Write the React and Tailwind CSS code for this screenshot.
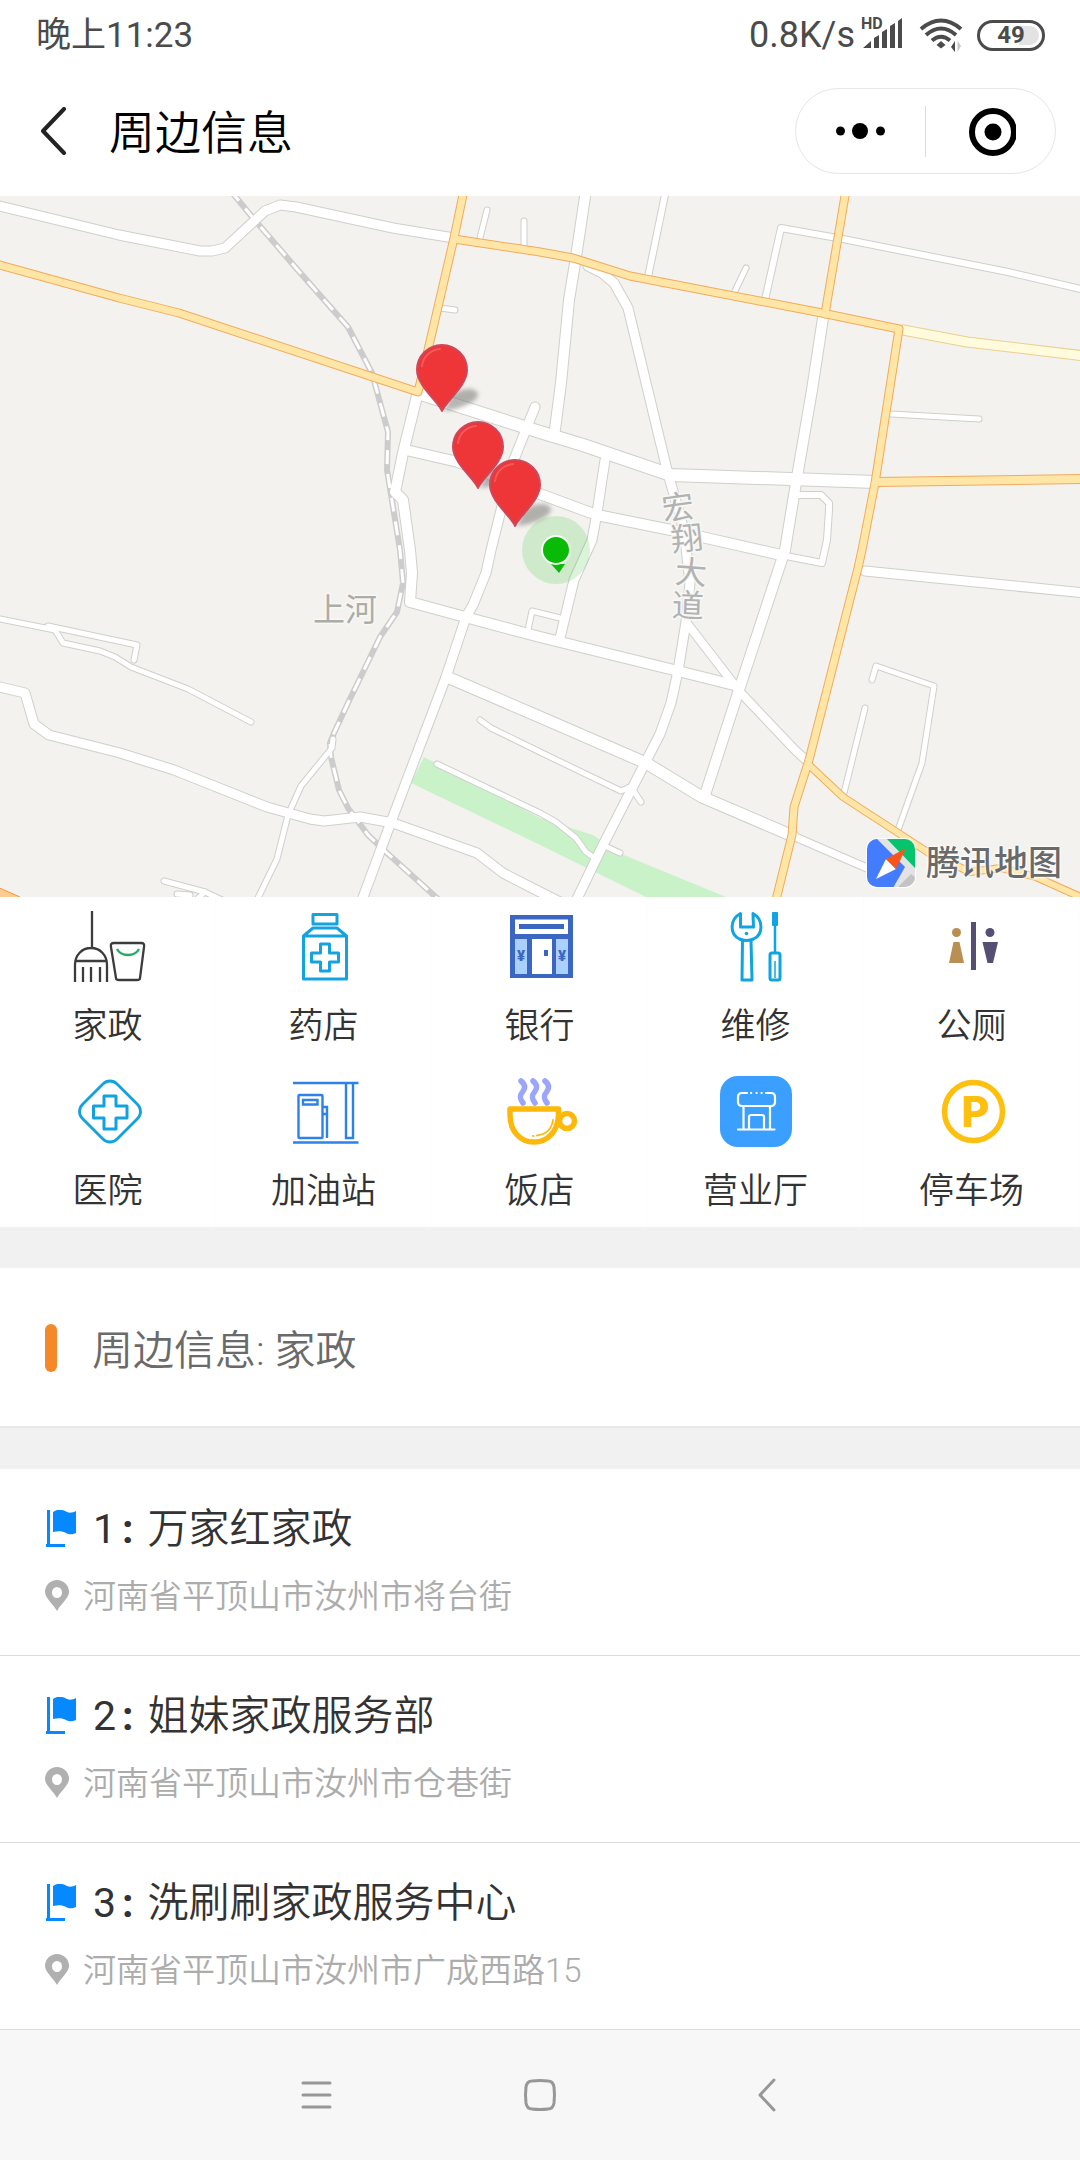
import React from "react";

const roads = [
  { w: 9, d: "M-5 205 L0 206 L119 235 L200 251 L212 251 L225 248 L265 211 L280 205 L296 207 L393 228 L454 238" },
  { w: 12, d: "M418 393 L540 432 L583 445 L671 475 L700 476 L876 482" },
  { w: 10, d: "M417 396 L403 453 L395 492 L403 500 L410 550 L412 573 L410 602 L465 617 L540 637 L678 671 L738 686" },
  { w: 10, d: "M406 450 L458 462 L540 494 L583 510 L597 515 L671 530 L781 555" },
  { w: 6, d: "M781 555 L822 563 L827 540 L829 510 L829 503 L821 495 L797 495" },
  { w: 9, d: "M535 407 L513 462 L491 550 L486 573 L473 605 L466 617 L446 677 L391 822 L362 900" },
  { w: 10, d: "M586 190 L576 257 L569 300 L561 383 L554 437" },
  { w: 6, d: "M666 190 L648 277" },
  { w: 6, d: "M765 300 L781 228 L843 239 L1008 272 L1085 290" },
  { w: 5, d: "M746 268 L734 293" },
  { w: 9, d: "M588 266 L602 273 L614 283 L628 308 L667 470 L684 530 L690 583 L686 622 L678 671 L671 703 L660 734 L643 767 L602 847 L575 903" },
  { w: 8, d: "M686 622 L740 692 L795 750 L807 761" },
  { w: 10, d: "M823 318 L812 390 L797 477 L785 550 L738 693 L704 798" },
  { w: 9, d: "M605 460 L597 513 L592 540 L574 580 L560 638" },
  { w: 5, d: "M560 618 L540 613 L532 611 L528 630" },
  { w: 11, d: "M447 677 L540 717 L646 763 L702 797 L793 836" },
  { w: 7, d: "M793 836 L867 868 L890 877" },
  { w: 5, d: "M480 720 L491 728 L540 752 L621 791 L630 787" },
  { w: 5, d: "M633 790 L641 802" },
  { w: 5, d: "M437 764 L540 813 L556 822 L576 838 L586 852 L593 857" },
  { w: 5, d: "M607 847 L620 853" },
  { w: 5, d: "M-5 618 L0 619 L55 630 L63 643 L100 651 L115 657 L131 667 L188 689 L251 722" },
  { w: 5, d: "M48 626 L137 645 L134 660" },
  { w: 9, d: "M-5 686 L0 687 L25 693 L34 724 L49 735 L120 753 L174 770 L267 807 L310 819 L324 821 L360 817 L393 823 L477 853 L503 873 L540 892 L560 902" },
  { w: 5, d: "M333 739 L332 748 L301 786 L288 815 L277 859 L256 902" },
  { w: 5, d: "M164 881 L205 892 L222 900 M177 894 L190 895 M205 892 L196 900" },
  { w: 9, d: "M865 571 L1085 593" },
  { w: 5, d: "M891 414 L979 419" },
  { w: 5, d: "M872 680 L876 666 L934 686 L922 763 L898 830" },
  { w: 5, d: "M865 708 L844 793" },
  { w: 5, d: "M487 210 L480 238 M524 221 L524 245 M440 308 L455 310" },
];

const highways = [
  { w: 8, d: "M-5 263 L0 265 L119 298 L179 313 L418 392 L428 350 L454 238 L464 190" },
  { w: 8, d: "M454 239 L540 252 L573 258 L630 276 L822 313 L899 329 L875 483 L862 550 L858 568 L809 760 L794 807 L792 835 L776 900" },
  { w: 8, d: "M846 190 L825 314" },
  { w: 9, d: "M876 482 L1085 479" },
  { w: 7, d: "M808 764 L843 797 L929 853 L970 872 L1001 868 L1036 877 L1085 899" },
];

const railway =
  "M230 190 L253 218 L296 268 L348 327 L372 373 L388 432 L387 470 L400 550 L403 583 L397 612 L380 637 L348 703 L334 733 L330 743 L331 757 L339 790 L348 808 L368 835 L387 853 L438 899";

function Pin({ x, y }) {
  return (
    <g transform={`translate(${x} ${y})`}>
      <path d="M2 0 C14 -1 36 -8 36 -17 C34 -25 16 -23 8 -14Z" fill="#6f6f6a" opacity=".5" filter="url(#soft)" />
      <path
        d="M0 0 C-3 -9 -25 -25 -25 -41 A25 25 0 0 1 25 -41 C25 -25 3 -9 0 0Z"
        fill="#ee3537"
        stroke="#d0465a"
        strokeWidth="2"
      />
      <path d="M-20 -45 C-19 -54 -12 -61 -2 -62" fill="none" stroke="#f25a5a" strokeWidth="2" strokeLinecap="round" />
    </g>
  );
}

function MapCanvas() {
  return (
    <svg
      className="block h-full w-full"
      viewBox="0 196 1080 701"
      preserveAspectRatio="xMidYMid slice"
      strokeLinejoin="round"
      strokeLinecap="round"
      role="img"
      aria-label="周边地图"
    >
      <defs>
        <filter id="soft" x="-50%" y="-50%" width="200%" height="200%">
          <feGaussianBlur stdDeviation="2" />
        </filter>
      </defs>
      <rect x="-10" y="190" width="1100" height="720" fill="#f3f2ee" />
      <path d="M424 757 L411 783 L540 845 L646 897 L726 897 L619 853 L593 835 L540 818Z" fill="#caf2c8" />
      <path d="M-5 886 L20 897 L20 905 L-5 905Z" fill="#fccb92" stroke="#f09a3a" strokeWidth="1" />
      <g fill="none" stroke="#cfcfcd">
        {roads.map((r) => (
          <path key={r.d} d={r.d} strokeWidth={r.w + 2} />
        ))}
      </g>
      <path d={railway} fill="none" stroke="#cccccc" strokeWidth="6" strokeLinecap="butt" />
      <path d={railway} fill="none" stroke="#ffffff" strokeWidth="3" strokeLinecap="butt" strokeDasharray="14 10" />
      <g fill="none" stroke="#ffffff">
        {roads.map((r) => (
          <path key={r.d} d={r.d} strokeWidth={r.w} />
        ))}
      </g>
      <path d="M903 330 L967 342 L1085 356" fill="none" stroke="#ecd08e" strokeWidth="11" />
      <path d="M903 330 L967 342 L1085 356" fill="none" stroke="#fffbdc" strokeWidth="9" />
      <g fill="none" stroke="#f1ab5c">
        {highways.map((r) => (
          <path key={r.d} d={r.d} strokeWidth={r.w + 1} />
        ))}
      </g>
      <g fill="none" stroke="#ffe6a6">
        {highways.map((r) => (
          <path key={r.d} d={r.d} strokeWidth={r.w - 1} />
        ))}
      </g>
      <g
        className="font-['Noto_Sans_CJK_SC',sans-serif]"
        fontSize="32"
        fill="#acaca8"
        stroke="#f8f8f6"
        strokeWidth="3"
        paintOrder="stroke"
      >
        <text x="313" y="621">上河</text>
        <g textAnchor="middle" fill="#b2b2b2">
          <text transform="translate(678 507) rotate(-8)" y="12">宏</text>
          <text transform="translate(687 538) rotate(-6)" y="12">翔</text>
          <text transform="translate(691 572) rotate(4)" y="12">大</text>
          <text transform="translate(688 605) rotate(2)" y="12">道</text>
        </g>
      </g>
      <Pin x={442} y={411} />
      <Pin x={478} y={488} />
      <Pin x={515} y={526} />
      <circle cx="556" cy="550" r="34" fill="#2fc12f" opacity=".18" />
      <path d="M551 564 L565 564 L559 573Z" fill="#09bb07" />
      <circle cx="556" cy="550" r="14" fill="#09bb07" stroke="#f4fbf3" strokeWidth="2" />
    </svg>
  );
}

function TencentLogo() {
  return (
    <svg className="size-[50px]" viewBox="0 0 50 50" aria-hidden="true">
      <defs>
        <clipPath id="tile">
          <rect x="1" y="1" width="48" height="48" rx="10" />
        </clipPath>
      </defs>
      <rect width="50" height="50" rx="11" fill="#ffffff" />
      <g clipPath="url(#tile)">
        <rect width="50" height="50" fill="#e3e3e5" />
        <path d="M0 0 H10 L39 29 L27 50 H0Z" fill="#437cff" />
        <path d="M20 0 H50 V31Z" fill="#06c46c" />
        <path d="M31 50 L45 36 L50 40 V50Z" fill="#c3c3c6" />
        <path d="M20 21 L30 31 L10 41Z" fill="#ffffff" />
        <path d="M20 21 L40 10 L30 31Z" fill="#f9541b" />
      </g>
    </svg>
  );
}

function Icon({ children }) {
  return (
    <svg className="size-[72px] overflow-visible" viewBox="0 0 72 72" fill="none" aria-hidden="true">
      {children}
    </svg>
  );
}

const categories = [
  {
    name: "家政",
    icon: (
      <Icon>
        <g stroke="#3c3c3c" strokeWidth="2.300">
          <path d="M20 0 V36 M3 71 V54 C3 44 10 37 19 37 S35 44 35 54 V71 M4 50 H34 M11 56 V71 M19 56 V71 M28 56 V71" />
          <path d="M42 32 H69 Q73 32 72 36 L68 67 Q68 69 65 69 H47 Q44 69 44 67 L39 36 Q38 32 42 32Z" />
        </g>
        <path d="M45 38 Q48 44 56 44 T67 38" stroke="#22ab68" strokeWidth="2.300" />
      </Icon>
    ),
  },
  {
    name: "药店",
    icon: (
      <Icon>
        <g stroke="#14a3e0" strokeWidth="3" strokeLinejoin="round">
          <path d="M25 3.500 H49 V13 H25Z M25 17 H49 L58.500 25 V68 H15.500 V25Z M15 25 H58" />
          <path d="M32.500 33 H41.500 V42 H50.500 V51 H41.500 V60 H32.500 V51 H23.500 V42 H32.500Z" />
        </g>
      </Icon>
    ),
  },
  {
    name: "银行",
    icon: (
      <Icon>
        <rect x="6" y="4" width="63" height="63" fill="#3b67c3" />
        <path d="M11 8.500 H64 V23 H11Z M28 28 H48 V63 H28Z" fill="#ffffff" />
        <path d="M15 13 H60 V18 H15Z M40 39 H44 V45 H40Z" fill="#3b67c3" />
        <path d="M11 28 H23 V63 H11Z M52 28 H64 V63 H52Z" fill="#abd0fc" />
        <g className="font-['Roboto',sans-serif] font-black" fontSize="15" fill="#3b67c3" textAnchor="middle">
          <text x="17" y="50">¥</text>
          <text x="58" y="50">¥</text>
        </g>
      </Icon>
    ),
  },
  {
    name: "维修",
    icon: (
      <Icon>
        <g stroke="#0fa4e2" strokeWidth="3" strokeLinejoin="round">
          <path d="M20.500 2.500 C10 8 9 23 19.500 28 Q26.500 31 33.500 28 C44 23 43 8 33 2.500 L33.500 16 H20.500Z" />
          <path d="M22.500 29 L22 69 H32 L31 29" />
          <path d="M55 14 V41" strokeWidth="2.500" />
          <rect x="50" y="42" width="10" height="27" rx="2" />
          <path d="M55 50 V67" strokeWidth="1.500" />
        </g>
        <rect x="52" y="1" width="6" height="14" rx="1" fill="#0fa4e2" />
        <circle cx="26.500" cy="22.500" r="1.800" fill="#0fa4e2" />
      </Icon>
    ),
  },
  {
    name: "公厕",
    icon: (
      <Icon>
        <g fill="#b98f53">
          <circle cx="20.500" cy="21.500" r="4.500" />
          <path d="M17.500 31 H23.500 L28 52 H13Z" />
        </g>
        <g fill="#554f73">
          <rect x="35" y="11" width="5" height="48" />
          <circle cx="54" cy="21.500" r="4.500" />
          <path d="M46.500 31 H62 L57 52 H51.500Z" />
        </g>
      </Icon>
    ),
  },
  {
    name: "医院",
    icon: (
      <Icon>
        <g stroke="#12a2df">
          <rect x="13.500" y="11" width="49" height="49" rx="10" transform="rotate(45 38 35.500)" strokeWidth="2.800" />
          <path d="M32 20 H44 V30 H55 V42 H44 V53 H32 V42 H21.500 V30 H32Z" strokeWidth="3" strokeLinejoin="round" />
        </g>
      </Icon>
    ),
  },
  {
    name: "加油站",
    icon: (
      <Icon>
        <g stroke="#2d82ea" strokeWidth="2.400">
          <path d="M5 7 H70.500 M5 66.500 H70.500 M58 7 V62 H65 V7" />
          <rect x="10.500" y="19" width="24" height="43" rx="1" />
          <path d="M15 24 H29.500 V28.500 H15Z M34.500 31 H39 V62 M34.500 38 H39" />
        </g>
      </Icon>
    ),
  },
  {
    name: "饭店",
    icon: (
      <Icon>
        <g stroke="#9aa5fb" strokeWidth="5.500" strokeLinecap="round">
          <path d="M17 5 C22 9 21 13 18.500 16 C15 20 16 23 19 27" />
          <path d="M29 5 C34 9 33 13 30.500 16 C27 20 28 23 31 27" />
          <path d="M41 5 C46 9 45 13 42.500 16 C39 20 40 23 43 27" />
        </g>
        <g stroke="#fdb90b" strokeLinecap="round" strokeLinejoin="round">
          <path d="M6 33 H54.500 V39 C54 55 44 66 30 66 C16 66 6 55 6 39Z" strokeWidth="5.500" />
          <circle cx="63" cy="45" r="7.500" strokeWidth="5.500" />
          <path d="M49 44 C48 52 43 58 33 59.500 M29 60 H29.500" strokeWidth="1.800" />
        </g>
      </Icon>
    ),
  },
  {
    name: "营业厅",
    icon: (
      <Icon>
        <rect width="72" height="71" rx="18" fill="#3b9fff" />
        <g stroke="#ffffff" strokeWidth="2.200" strokeLinecap="round">
          <path d="M27 17 H22 Q18 17 18 21 V26 Q18 30 22 30 H51 Q55 30 55 26 V21 Q55 17 51 17 H46" />
          <path d="M31 17 H31.200 M36.500 17 H36.700 M41.500 17 H41.700" />
          <path d="M23.500 30 V53 M50 30 V53 M18 53.500 H54.500 M29 53 V41 Q29 39 31 39 H42 Q44 39 44 41 V53" />
        </g>
      </Icon>
    ),
  },
  {
    name: "停车场",
    icon: (
      <Icon>
        <circle cx="37.500" cy="35.500" r="29" stroke="#fdc00f" strokeWidth="5.500" />
        <text
          className="font-['Inter','Open_Sans',sans-serif] font-extrabold"
          x="39.500"
          y="51"
          fontSize="43"
          textAnchor="middle"
          fill="#fdc00f"
        >
          P
        </text>
      </Icon>
    ),
  },
];

const places = [
  { name: "万家红家政", address: "河南省平顶山市汝州市将台街" },
  { name: "姐妹家政服务部", address: "河南省平顶山市汝州市仓巷街" },
  { name: "洗刷刷家政服务中心", address: "河南省平顶山市汝州市广成西路15" },
];

function StatusBar() {
  return (
    <div className="flex h-[70px] items-center justify-between pr-[35px] pl-9 text-[#4b4b4b]">
      <span className="text-[35px] leading-none">晚上11:23</span>
      <div className="flex items-center">
        <span className="text-[36px] leading-none">0.8K/s</span>
        <svg className="ml-1.5 h-10 w-11" viewBox="0 0 44 40" fill="#4b4b4b" aria-hidden="true">
          <text className="font-['Roboto',sans-serif] font-bold" x="0" y="14" fontSize="16">HD</text>
          <path d="M2 33 L10 26 V33Z M13 23 L18 20 V33 H13Z M21 17 L26 14 V33 H21Z M29 11 L34 8 V33 H29Z M37 6 L41 3 V33 H37Z" />
        </svg>
        <svg className="ml-3.5 h-9 w-11" viewBox="0 0 44 36" fill="none" stroke="#4b4b4b" strokeWidth="4" aria-hidden="true">
          <path d="M2 12 Q22 -5 42 12 M7 18 Q22 5 37 18 M13 23.500 Q22 16 31 23.500" />
          <path d="M22 24 L26.500 28 L22 31.500 L17.500 28Z" fill="#4b4b4b" stroke="none" />
          <path d="M36 24 V35 L32 30Z" fill="#4b4b4b" stroke="none" />
          <path d="M38.500 35 V24 L42 29Z" fill="#c9c9c9" stroke="none" />
        </svg>
        <span className="relative ml-3.5 flex h-[31px] w-[68px] items-center justify-center rounded-full border-[3px] border-[#4b4b4b] p-[3px]">
          <span className="absolute top-[3px] right-[3px] bottom-[3px] w-5 rounded-r-full bg-[#e3e3e3]" />
          <span className="relative text-[24px] leading-none font-bold">49</span>
        </span>
      </div>
    </div>
  );
}

function TitleBar() {
  return (
    <header className="flex h-[126px] items-center pr-6 pb-1 pl-9">
      <button type="button" aria-label="返回" className="mr-[37px]">
        <svg className="h-12 w-9" viewBox="0 0 36 48" fill="none" stroke="#232323" strokeWidth="4" strokeLinecap="round" strokeLinejoin="round">
          <path d="M28 2 L7 24 L28 46" />
        </svg>
      </button>
      <h1 className="flex-1 pt-1 text-[46px] leading-none font-[350] text-black">周边信息</h1>
      <div className="flex h-[86px] w-[261px] items-center rounded-full border border-[#e6e6e6]">
        <button type="button" aria-label="更多" className="flex h-full flex-1 items-center justify-center">
          <svg className="h-5 w-[52px]" viewBox="0 0 52 20">
            <circle cx="5.500" cy="10" r="4.500" />
            <circle cx="25" cy="10" r="8" />
            <circle cx="45.500" cy="10" r="4.500" />
          </svg>
        </button>
        <span className="h-[51px] w-px bg-[#dcdcdc]" />
        <button type="button" aria-label="关闭" className="flex h-full flex-1 items-center justify-center">
          <svg className="size-[50px]" viewBox="0 0 50 50">
            <circle cx="27" cy="26" r="21" fill="none" stroke="#000000" strokeWidth="6" />
            <circle cx="27" cy="26" r="8.500" />
          </svg>
        </button>
      </div>
    </header>
  );
}

function CategoryButton({ item }) {
  return (
    <button type="button" className="flex h-[165px] flex-col items-center border-r border-[#fcfcfc] pt-3.5 text-[#333333]">
      {item.icon}
      <span className="mt-[18px] text-[35px] leading-[52px] font-[350]">{item.name}</span>
    </button>
  );
}

function PlaceRow({ place, index }) {
  return (
    <li className="border-b border-[#dcdcdc] pt-[30px] pr-8 pb-8 pl-[45px]">
      <div className="flex h-[60px] items-center text-[41px] leading-[60px] text-[#333333]">
        <svg className="h-[38px] w-8" viewBox="0 0 32 38" fill="#0689fe" aria-hidden="true">
          <path d="M2 0 H5 V34 H20 V37 H1 V34 H2Z" />
          <path d="M8 2 C14 -2 18 0 22 2 C25 3.500 28 2.500 31 1 V23 C26 25.500 23 24 20 22.500 C16 20.500 12 21 8 22Z" />
        </svg>
        <span className="ml-4">{index}</span>
        <span className="mr-3.5 ml-1.5 font-bold">:</span>
        <h2 className="font-[350]">{place.name}</h2>
      </div>
      <div className="mt-3 flex h-[52px] items-center text-[33px] leading-[52px] text-[#acacac]">
        <svg className="h-[34px] w-6" viewBox="0 0 24 34" fill="#b0b0b0" aria-hidden="true">
          <path fillRule="evenodd" d="M12 31 C9 25 0 18 0 12 A12 12 0 0 1 24 12 C24 18 15 25 12 31Z M12 7 A5 5.500 0 1 0 12 18 A5 5.500 0 1 0 12 7Z" />
        </svg>
        <p className="ml-3.5 font-[350]">{place.address}</p>
      </div>
    </li>
  );
}

function SystemNav() {
  return (
    <nav className="flex flex-1 items-center justify-center bg-[#f7f7f7] py-10" aria-label="系统导航">
      <button type="button" aria-label="菜单" className="flex w-56 justify-center">
        <svg className="h-9 w-9" viewBox="0 0 36 36" fill="none" stroke="#979797" strokeWidth="3" strokeLinecap="round">
          <path d="M5 6 H32 M5 18 H32 M5 30 H32" />
        </svg>
      </button>
      <button type="button" aria-label="主页" className="flex w-56 justify-center">
        <svg className="h-9 w-9" viewBox="0 0 36 36" fill="none" stroke="#979797" strokeWidth="3">
          <path d="M10 4 Q18 3 26 4 Q31 4 32 10 Q33 18 32 26 Q31 32 26 32 Q18 33 10 32 Q5 32 4 26 Q3 18 4 10 Q5 4 10 4Z" />
        </svg>
      </button>
      <button type="button" aria-label="后退" className="flex w-56 justify-center">
        <svg className="h-9 w-9" viewBox="0 0 36 36" fill="none" stroke="#979797" strokeWidth="3" strokeLinecap="round" strokeLinejoin="round">
          <path d="M28 3 L14 18 L28 33" />
        </svg>
      </button>
    </nav>
  );
}

export default function App() {
  return (
    <div className="flex min-h-screen flex-col bg-white font-['Roboto','Noto_Sans_CJK_SC',sans-serif]">
      <StatusBar />
      <TitleBar />
      <section className="relative h-[701px] overflow-hidden">
        <MapCanvas />
        <div className="absolute right-[18px] bottom-[9px] flex items-center gap-2.5">
          <TencentLogo />
          <span className="text-[34px] leading-none font-medium text-[#6a6a6a] [text-shadow:0_0_3px_#fff,0_0_3px_#fff,0_0_3px_#fff]">
            腾讯地图
          </span>
        </div>
      </section>
      <section className="grid grid-cols-5" aria-label="分类">
        {categories.map((item) => (
          <CategoryButton key={item.name} item={item} />
        ))}
      </section>
      <section className="flex items-center border-t-[41px] border-[#f1f1f1] pt-14 pb-[54px] pl-[45px]">
        <span className="h-[48px] w-3 rounded-full bg-[#f58829]" />
        <p className="ml-[35px] pt-1.5 text-[41px] leading-[42px] font-[350] text-[#6a6a6a]">周边信息: 家政</p>
      </section>
      <div className="h-[43px] border-t-2 border-[#e8e8e8] bg-[#f1f1f1]" />
      <ul>
        {places.map((place, i) => (
          <PlaceRow key={place.name} place={place} index={i + 1} />
        ))}
      </ul>
      <SystemNav />
    </div>
  );
}
